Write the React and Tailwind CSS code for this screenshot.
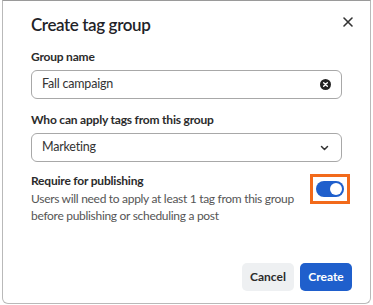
export default function App() {
  return (
    <div className="w-[373px] h-[305px] bg-white" style={{ fontFamily: 'Lato, "Noto Sans", sans-serif' }}>
      <div className="ml-[2px] w-[369px] h-[304px] border border-t-[#9a9a9a] border-[#b9b9b9] rounded-b-md bg-white flex flex-col px-[28px] pt-[12px] pb-[12px]">
        {/* Header */}
        <div className="flex items-start justify-between">
          <h1 className="text-[17px] font-semibold text-[#1f2328] leading-[24px] tracking-[-0.4px]">Create tag group</h1>
          <button className="mt-[3px] -mr-[12px] text-[#333]">
            <svg width="12" height="12" viewBox="0 0 12 12" fill="none" stroke="currentColor" strokeWidth="1.6" strokeLinecap="round">
              <path d="M2 2l8 8M10 2l-8 8" />
            </svg>
          </button>
        </div>

        {/* Group name */}
        <label className="mt-[12px] text-[12px] font-bold text-[#2b2b2b] leading-[16px] tracking-[-0.2px]">Group name</label>
        <div className="mt-[5px] h-[29px] border border-[#a8a8a8] rounded-[6px] flex items-center justify-between pl-[10px] pr-[10px]">
          <span className="text-[12.5px] text-[#333] tracking-[-0.2px]">Fall campaign</span>
          <svg width="11" height="11" viewBox="0 0 12 12">
            <circle cx="6" cy="6" r="6" fill="#222" />
            <path d="M4 4l4 4M8 4l-4 4" stroke="#fff" strokeWidth="1.5" strokeLinecap="round" />
          </svg>
        </div>

        {/* Who can apply */}
        <label className="mt-[13px] text-[12px] font-bold text-[#2b2b2b] leading-[16px] tracking-[-0.2px]">Who can apply tags from this group</label>
        <div className="mt-[5px] h-[29px] border border-[#a8a8a8] rounded-[6px] flex items-center justify-between pl-[10px] pr-[12px]">
          <span className="text-[12.5px] text-[#333] tracking-[-0.2px]">Marketing</span>
          <svg width="9" height="6" viewBox="0 0 9 6" fill="none" stroke="#333" strokeWidth="1.5" strokeLinecap="round" strokeLinejoin="round">
            <path d="M1.5 1.5l3 3 3-3" />
          </svg>
        </div>

        {/* Require for publishing */}
        <div className="mt-[11px] flex items-start justify-between">
          <div>
            <div className="text-[12px] font-bold text-[#2b2b2b] leading-[16px] tracking-[-0.2px]">Require for publishing</div>
            <p className="mt-[1px] text-[12px] text-[#555] leading-[17px] tracking-[-0.3px]">
              Users will need to apply at least 1 tag from this group
              <br />
              before publishing or scheduling a post
            </p>
          </div>
          <div className="mt-[1px] -mr-[8px] border-[3px] border-[#f26a1b] px-[3px] py-[4px]">
            <div className="w-[28px] h-[16px] rounded-full bg-[#1f5fcc] flex items-center justify-end pr-[2px]">
              <div className="w-[12px] h-[12px] rounded-full bg-white" />
            </div>
          </div>
        </div>

        {/* Footer */}
        <div className="mt-auto flex justify-end gap-[6px] -mr-[10px]">
          <button className="h-[28px] w-[52px] rounded-[5px] bg-[#eef0f2] text-[12px] font-bold text-[#2b2b2b]">Cancel</button>
          <button className="h-[28px] w-[52px] rounded-[5px] bg-[#1f5fcc] text-[12px] font-bold text-white">Create</button>
        </div>
      </div>
    </div>
  );
}
